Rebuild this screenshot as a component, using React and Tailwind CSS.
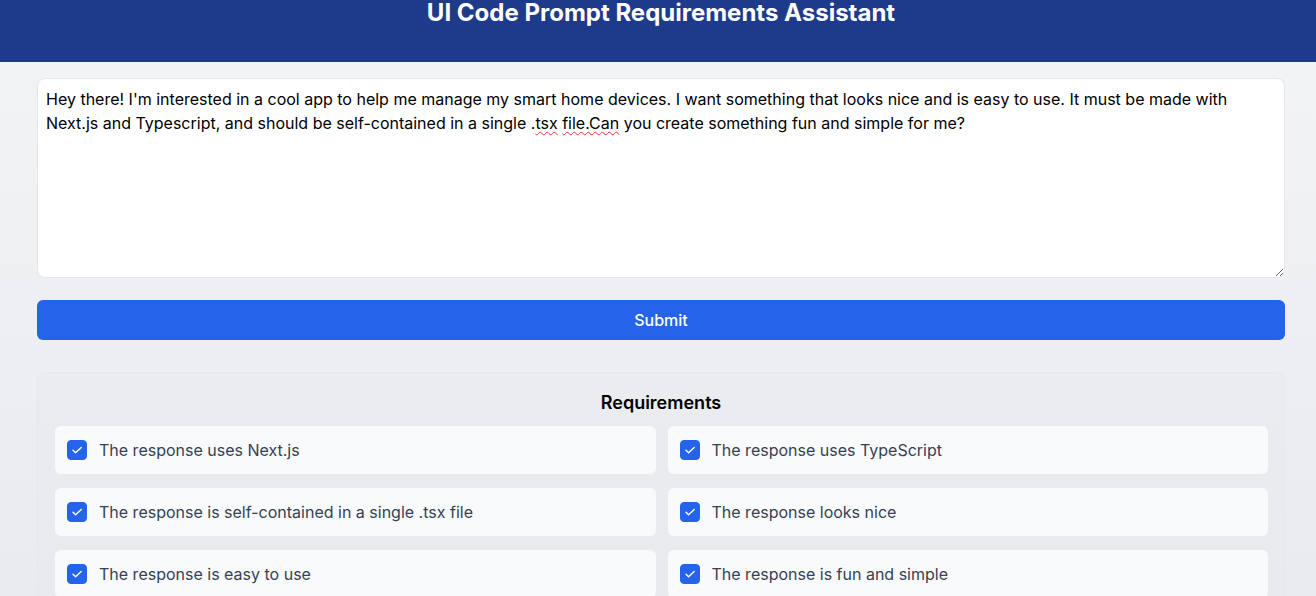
import { useState } from 'react'

const PROMPT_START =
  "Hey there! I'm interested in a cool app to help me manage my smart home devices. I want something that looks nice and is easy to use. It must be made with Next.js and Typescript, and should be self-contained in a single ."
const PROMPT_END = ' you create something fun and simple for me?'
const PROMPT = PROMPT_START + 'tsx file.Can' + PROMPT_END

const REQUIREMENTS = [
  'The response uses Next.js',
  'The response uses TypeScript',
  'The response is self-contained in a single .tsx file',
  'The response looks nice',
  'The response is easy to use',
  'The response is fun and simple',
]

function Check({ checked, onChange }) {
  return (
    <span className="relative flex h-5 w-5 shrink-0">
      <input
        type="checkbox"
        checked={checked}
        onChange={onChange}
        className="h-5 w-5 appearance-none rounded-[4px] border border-gray-400 bg-white checked:border-[#2563eb] checked:bg-[#2563eb]"
      />
      {checked && (
        <svg viewBox="0 0 20 20" className="pointer-events-none absolute inset-0 h-5 w-5" fill="none">
          <path d="M6 10.2l2.6 2.6L14.2 7.4" stroke="white" strokeWidth="1.4" strokeLinecap="round" strokeLinejoin="round" />
        </svg>
      )}
    </span>
  )
}

export default function App() {
  const [prompt, setPrompt] = useState(PROMPT)
  const [checked, setChecked] = useState(REQUIREMENTS.map(() => true))

  const font = { fontFamily: 'Inter, "Noto Sans", sans-serif' }

  return (
    <div className="min-h-screen bg-linear-to-b from-[#f3f4f6] to-[#e9eaee] pb-8" style={font}>
      <header className="h-[62px] bg-[#1e3a8a] pl-[6px]">
        <h1 className="text-center text-2xl font-bold leading-[26px] text-white">
          UI Code Prompt Requirements Assistant
        </h1>
      </header>

      <main className="pl-[37px] pr-[31px] pt-4">
        <div className="relative">
          <textarea
            value={prompt}
            onChange={(e) => setPrompt(e.target.value)}
            spellCheck={false}
            className="block h-[200px] w-full rounded-lg border border-gray-200 bg-white p-2 text-base leading-6 text-black outline-none"
          />
          {/* spell-check squiggles over the textarea text */}
          {prompt === PROMPT && (
            <div className="pointer-events-none absolute inset-0 border border-transparent p-2 text-base leading-6 text-transparent whitespace-pre-wrap break-words">
              {PROMPT_START}
              <span className="underline decoration-red-500 decoration-wavy decoration-1 underline-offset-2">tsx</span>{' '}
              <span className="underline decoration-red-500 decoration-wavy decoration-1 underline-offset-2">file.Can</span>
              {PROMPT_END}
            </div>
          )}
        </div>

        <button className="mt-[22px] h-10 w-full rounded-md bg-[#2563eb] text-base font-medium text-white">
          Submit
        </button>

        <section className="mt-8 rounded-lg border border-gray-200/70 bg-gray-200/30 px-[16px] py-4">
          <h2 className="mb-[9px] text-center text-lg font-semibold leading-7 text-black">Requirements</h2>
          <div className="grid grid-cols-2 gap-x-3 gap-y-3.5 pl-px">
            {REQUIREMENTS.map((r, i) => (
              <label key={r} className="flex items-center gap-3 rounded-md bg-[#f9fafb] p-3">
                <Check
                  checked={checked[i]}
                  onChange={() => setChecked(checked.map((c, j) => (j === i ? !c : c)))}
                />
                <span className="text-base leading-6 text-gray-700">{r}</span>
              </label>
            ))}
          </div>
        </section>
      </main>
    </div>
  )
}
